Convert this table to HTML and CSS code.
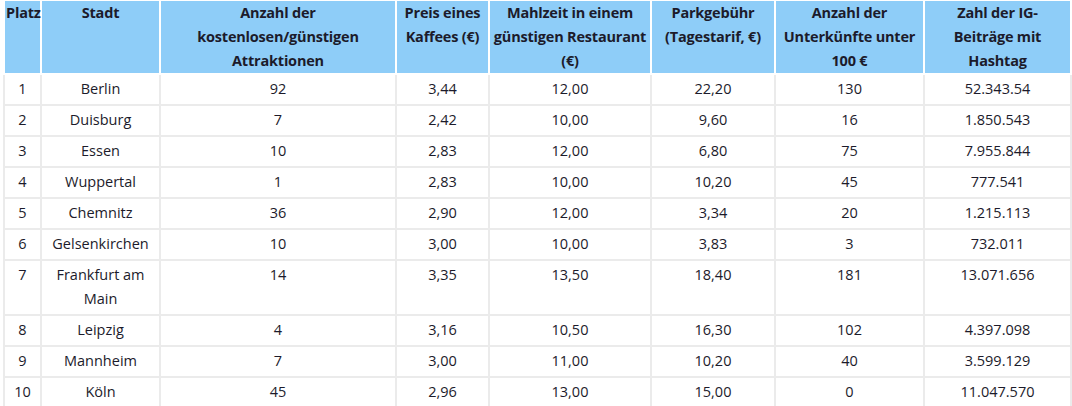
FILE: index.html
```html
<!DOCTYPE html>
<html lang="de">
<head>
<meta charset="utf-8">
<link rel="stylesheet" href="styles.css">
</head>
<body>
<table class="ranking">
  <colgroup>
    <col class="c1"><col class="c2"><col class="c3"><col class="c4"><col class="c5"><col class="c6"><col class="c7"><col class="c8">
  </colgroup>
  <thead>
    <tr>
      <th>Platz</th>
      <th>Stadt</th>
      <th>Anzahl der kostenlosen/günstigen Attraktionen</th>
      <th>Preis eines Kaffees (€)</th>
      <th>Mahlzeit in einem günstigen Restaurant (€)</th>
      <th>Parkgebühr (Tagestarif, €)</th>
      <th>Anzahl der Unterkünfte unter 100 €</th>
      <th class="narrow">Zahl der IG-Beiträge mit Hashtag</th>
    </tr>
  </thead>
  <tbody>
    <tr><td>1</td><td>Berlin</td><td>92</td><td>3,44</td><td>12,00</td><td>22,20</td><td>130</td><td>52.343.54</td></tr>
    <tr><td>2</td><td>Duisburg</td><td>7</td><td>2,42</td><td>10,00</td><td>9,60</td><td>16</td><td>1.850.543</td></tr>
    <tr><td>3</td><td>Essen</td><td>10</td><td>2,83</td><td>12,00</td><td>6,80</td><td>75</td><td>7.955.844</td></tr>
    <tr><td>4</td><td>Wuppertal</td><td>1</td><td>2,83</td><td>10,00</td><td>10,20</td><td>45</td><td>777.541</td></tr>
    <tr><td>5</td><td>Chemnitz</td><td>36</td><td>2,90</td><td>12,00</td><td>3,34</td><td>20</td><td>1.215.113</td></tr>
    <tr><td>6</td><td>Gelsenkirchen</td><td>10</td><td>3,00</td><td>10,00</td><td>3,83</td><td>3</td><td>732.011</td></tr>
    <tr><td>7</td><td>Frankfurt am Main</td><td>14</td><td>3,35</td><td>13,50</td><td>18,40</td><td>181</td><td>13.071.656</td></tr>
    <tr><td>8</td><td>Leipzig</td><td>4</td><td>3,16</td><td>10,50</td><td>16,30</td><td>102</td><td>4.397.098</td></tr>
    <tr><td>9</td><td>Mannheim</td><td>7</td><td>3,00</td><td>11,00</td><td>10,20</td><td>40</td><td>3.599.129</td></tr>
    <tr><td>10</td><td>Köln</td><td>45</td><td>2,96</td><td>13,00</td><td>15,00</td><td>0</td><td>11.047.570</td></tr>
  </tbody>
</table>
</body>
</html>
```

FILE: styles.css
```css
html, body {
  margin: 0;
  padding: 0;
  background: #ffffff;
}

body {
  padding: 1px 0 0 3px;
  font-family: "Open Sans", Lato, sans-serif;
  color: #1c1b2b;
}

.ranking {
  border-collapse: collapse;
  table-layout: fixed;
  width: 1067px;
}

.c1 { width: 37px; }
.c2 { width: 119px; }
.c3 { width: 236px; }
.c4 { width: 93px; }
.c5 { width: 162px; }
.c6 { width: 124px; }
.c7 { width: 149px; }
.c8 { width: 147px; }

.ranking th,
.ranking td {
  border: 2px solid #ebebeb;
  text-align: center;
  vertical-align: top;
  font-size: 14.5px;
  line-height: 24px;
}

.ranking th {
  background: #8ecdf8;
  font-weight: 700;
  padding: 0 1px;
  border-color: #ffffff;
  border-top: none;
  letter-spacing: -0.2px;
}

.ranking th.narrow {
  padding: 0 12px;
}

.ranking td {
  padding: 2px 2px 3px;
  font-weight: 400;
}
```
